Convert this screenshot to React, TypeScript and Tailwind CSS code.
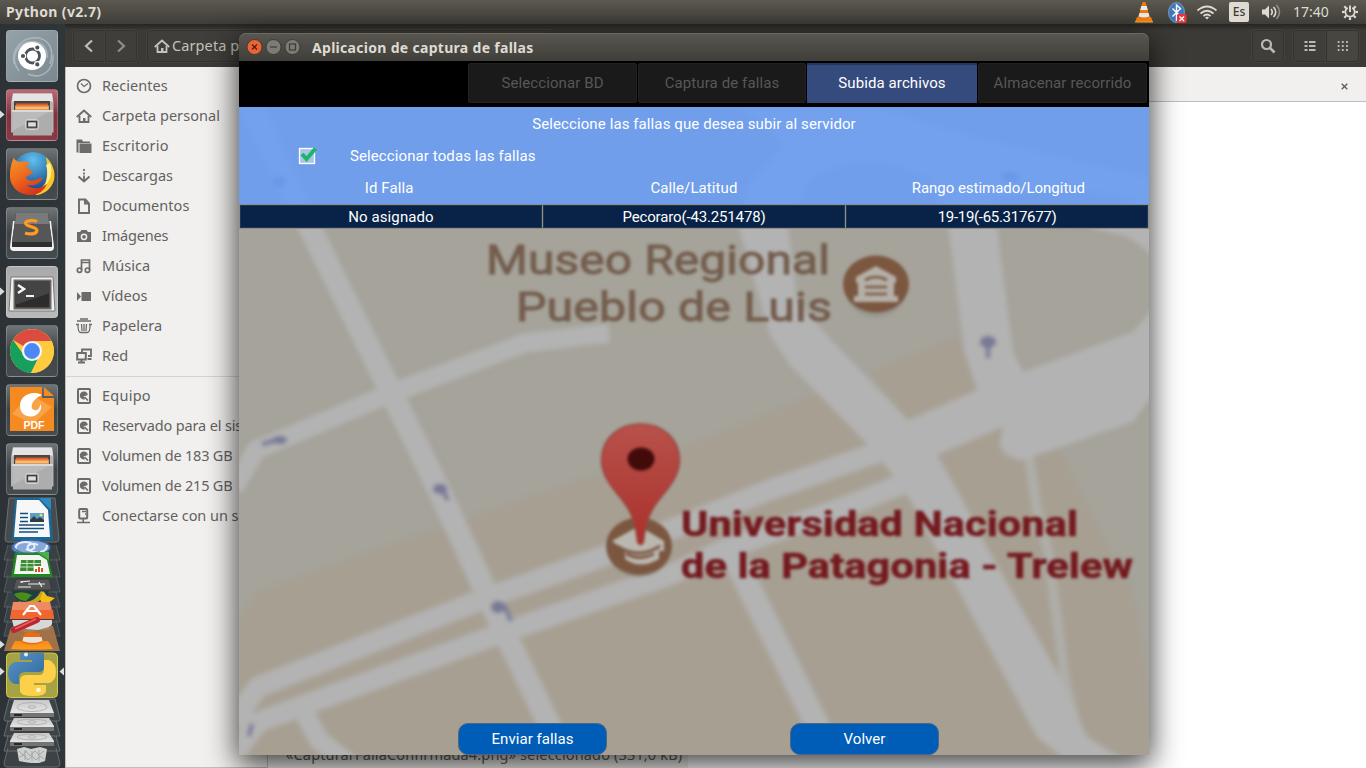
import React from "react";

type P = { children?: React.ReactNode };

const sans = "font-['Noto_Sans','Open_Sans',sans-serif]";

/* ---------- launcher ---------- */

function Tile({ children, bg, arrow }: P & { bg: string; arrow?: boolean }) {
  return (
    <div className="relative flex h-[52px] w-[65px] shrink-0 items-center pl-1.5">
      {arrow && (
        <svg className="absolute left-0 top-[20px]" width="5" height="11" viewBox="0 0 5 11">
          <path d="M0 1.5 4.6 5.5 0 9.5Z" fill="#dcdcdc" />
        </svg>
      )}
      <div className={`h-[52px] w-[52px] overflow-hidden rounded-[4px] border border-white/20 ${bg}`}>
        <svg width="50" height="50" viewBox="1 1 50 50">{children}</svg>
      </div>
    </div>
  );
}

const dark = "bg-linear-to-b from-[#6f7477] via-[#3e4346] to-[#454c4f]";

function Cabinet() {
  return (
    <g>
      <path d="M7 4.500h39l1.500 9v30H5v-30z" fill="#b4b4b4" />
      <path d="M7 4.500h39l1 8H6z" fill="#e4e4e4" />
      <rect x="8" y="12" width="36" height="11" fill="#4a4442" />
      <path d="M10 14.500h32v3H10z" fill="#d8602a" />
      <path d="M9 16.500h34v6H9z" fill="#e9984a" />
      <path d="M10 18.500h32v1H10z" fill="#fbe0b4" />
      <path d="M7 21.500h39v25H7z" fill="#adadad" />
      <path d="M7 21.500h39l-39 20z" fill="#bababa" />
      <path d="M6 21h41v2H6z" fill="#d9d9d9" />
      <rect x="19.500" y="30.500" width="13" height="10" rx="2" fill="#a2a2a2" stroke="#d4d4d4" />
      <rect x="21.500" y="32.700" width="9" height="5.500" fill="#dedede" stroke="#3a3a3a" strokeWidth="1.300" />
    </g>
  );
}

function Stack() {
  return (
    <svg className="mt-0.5 shrink-0" width="65" height="271" viewBox="0 497 65 271">
      <defs>
        <linearGradient id="drive" x1="0" y1="0" x2="0" y2="1">
          <stop offset="0" stopColor="#c8c8c8" />
          <stop offset="1" stopColor="#efefef" />
        </linearGradient>
        <linearGradient id="pyb" x1="0" y1="0" x2="1" y2="1">
          <stop offset="0" stopColor="#5b93c4" />
          <stop offset="1" stopColor="#2d69a0" />
        </linearGradient>
        <linearGradient id="vlc" x1="0" y1="0" x2="0" y2="1">
          <stop offset="0" stopColor="#f58a1b" />
          <stop offset="1" stopColor="#ff9c1c" />
        </linearGradient>
      </defs>
      <path d="M9 498h46l4 41q0 3-3 3H8q-3 0-3-3z" fill="#454b4f" stroke="#6a7074" />
      <path d="M8 545 4 560h56l-4-15M8 558 4 577h56l-4-19M8 575l-4 17h56l-4-17M8 592l-4 15h56l-4-15M8 605l-4 17h56l-4-17M8 620l-4 16h56l-4-16" fill="#3a4144" stroke="#565c60" />
      {/* writer */}
      <path d="M15 498h27l9 10 2 32H12z" fill="#1b6597" />
      <path d="M17 500h22l9 10 2 27H14z" fill="#f7f7f7" />
      <path d="M39 498h12v12z" fill="#2f89c0" />
      <path d="M20 513.500h8M20 517.500h8M20 521.500h8M19 525h25M19 528.500h25M19 532h19" stroke="#15507d" strokeWidth="1.700" />
      <rect x="30" y="513" width="14" height="9" fill="#5b9fc9" />
      <path d="M30 522v-2l4-4 3 3 3-2 4 3v2z" fill="#303b42" />
      <circle cx="41" cy="515" r="1.500" fill="#f0d75a" />
      {/* spiral */}
      <ellipse cx="31" cy="547.500" rx="19" ry="7.500" fill="#87a9d8" stroke="#3a65a4" strokeWidth="1.500" />
      <path d="M16 550c-2-8 10-10 17-6 5 4-3 8-7 5M47 545c0 8-12 9-18 5-5-5 4-8 9-5" fill="none" stroke="#e6eefb" strokeWidth="2" />
      <path d="M12 545c4 8 14 10 28 7" fill="none" stroke="#406dae" strokeWidth="1.500" />
      {/* calc */}
      <path d="M15 553h25l8 4 5 20H11z" fill="#1e8a1e" />
      <path d="M17 555h22l8 5 3 14H14z" fill="#f4f5f2" />
      <path d="M37 552h12v8z" fill="#48b248" />
      <path d="M21 560h20v11H20z" fill="#3b8c34" />
      <path d="M20.500 563.500h20M20 567h20M27 560v11M34 560v11" stroke="#d6ead0" strokeWidth=".9" />
      <path d="M34 566h9v6h-9z" fill="#fff" />
      <path d="M36 572v-3M39 572v-5M42 572v-4" stroke="#d85320" strokeWidth="2" />
      {/* typed card */}
      <path d="M16 579h33l3 11H13z" fill="#555" stroke="#393939" />
      <path d="M20 582l10-1M22 583v-2M28 584h17M39 582l3 5M18 587h13" stroke="#eee" strokeWidth="1.200" />
      {/* globe */}
      <path d="M11 591h38l-4 9q-14 6-27 1z" fill="#1d3f42" />
      <path d="M14 594q8-4 18 1l-6 6q-8 0-12-7" fill="#4d8a1e" />
      <path d="M18 601q16 4 23-10l4 2q-5 13-22 12z" fill="#c3a51c" />
      <path d="m43 591 4 5 8 2-12 9-3-8z" fill="#f3bf17" />
      {/* software box */}
      <path d="M13 602h37l4 17H10z" fill="#ee8a63" />
      <path d="M12 610h41l1 9H10z" fill="#f1652f" />
      <path d="m23 615 7-9h4l7 9M27 611h11" fill="none" stroke="#fff" strokeWidth="2.200" />
      {/* settings */}
      <path d="M12 620h40v4l-3 6h-12l-6 4-8-3-9-3z" fill="#d7d8d8" />
      {/* vlc */}
      <path d="m12 627 41-1 7 25H4l6-21z" fill="#a9764b" fillOpacity=".92" />
      <path d="M22 622h27v5l-11 3-12-1z" fill="#d7d8d8" />
      <path d="m37 620-23 10" stroke="#be2530" strokeWidth="6" strokeLinecap="round" />
      <path d="m36 619-21 10" stroke="#e6655f" strokeWidth="1.500" />
      <path d="M15 641h33l5 8q-20 1-42 0z" fill="url(#vlc)" />
      <path d="M25 633h14l4 9q-11 5-22 0z" fill="#f06a0a" />
      <path d="M23.500 637h18l1 4q-10 4-20 0z" fill="#e6e3df" />
      {/* python */}
      <rect x="6.500" y="653" width="51" height="44.500" rx="4" fill="#a5a346" stroke="#cdca4a" />
      <path d="M20 653h24v14q0 5-6 5H25q-6 0-6 6v6h-4q-7-2-7-11t7-11h17v-2H20z" fill="url(#pyb)" />
      <path d="M44 660h5q7 3 7 12t-7 11H34v2h12v6q0 5-13 5t-13-5v-10q0-6 6-6h13q5 0 5-6z" fill="#fdd04a" />
      <circle cx="26" cy="654.500" r="2" fill="#e1eef8" />
      <circle cx="38.500" cy="690" r="2.300" fill="#fff7dc" />
      {/* drives and trash */}
      <path d="M9 699 4 719q0 2 2 2h52q2 0 2-2l-5-20zM8 721l-4 15h56l-4-15M8 736l-4 15h56l-4-15M8 748l-4 15q0 4 3 4h50q3 0 3-4l-4-15" fill="#3c4346" stroke="#666c70" />
      {[0, 18, 33].map((d, i) => (
        <g key={d} transform={`translate(0 ${d})`}>
          <path d={i ? "M14 700h35l5 8v5H10v-5z" : "M14 700h35l5 13v4H10v-4z"} fill="url(#drive)" />
          <path d={i ? "M10 709h44v4H10z" : "M10 713h44v4H10z"} fill="#747474" />
          <path d={i ? "M14 710h8v2h-8z" : "M14 714h8v2h-8z"} fill="#262626" />
          <ellipse cx="32" cy={i ? 704 : 707} rx="15" ry={i ? 2.8 : 4.5} fill="none" stroke="#b4b4b4" />
          <ellipse cx="32" cy={i ? 704 : 707} rx="4" ry="1.300" fill="none" stroke="#b4b4b4" />
        </g>
      ))}
      <path d="m17 749 7-2 7 2 9-2 7 2-2 12-6 2-8 0-7-1-5-1z" fill="#cfd0cf" />
      <path d="m19 751 4 4 3-4 4 5 5-5 4 4 5-4M20 757l4-2 4 5 4-4 4 4 4-4 4 3M25 750v10M32 751v10M39 750v11" fill="none" stroke="#a3a6a5" />
      <path d="M0 640.500 4.600 644.500 0 648.500ZM0 667.500 4.600 671.500 0 675.500ZM64 667.500 59.500 671.500 64 675.500Z" fill="#dcdcdc" />
    </svg>
  );
}

function Launcher() {
  return (
    <aside className="flex w-[65px] shrink-0 flex-col bg-linear-to-r from-[#2c3235] to-[#2f3639] pt-1.5">
      <div className="flex flex-col gap-[7px]">
        <Tile bg="bg-linear-to-br from-[#95a2a8] to-[#7b898f]">
          <g fill="none" stroke="#b9c4c8" strokeWidth="1.500" opacity=".7">
            <path d="M8 34C5 18 17 6 33 8c12 3 15 14 11 26" />
            <path d="M13 41c-9-12-4-24 8-29 14-3 21 6 20 16" />
            <path d="M22 44c14 6 26-4 25-19" />
          </g>
          <circle cx="26" cy="26" r="14" fill="#fff" />
          <circle cx="26.500" cy="26" r="7" fill="none" stroke="#4a5559" strokeWidth="2.800" />
          <g fill="#4a5559" stroke="#fff" strokeWidth="1.200">
            <circle cx="17" cy="26" r="2.700" />
            <circle cx="31.300" cy="17.600" r="2.700" />
            <circle cx="31.300" cy="34.400" r="2.700" />
          </g>
        </Tile>
        <Tile bg="bg-linear-to-b from-[#b66c77] via-[#84303d] to-[#8a3946]" arrow>
          <Cabinet />
        </Tile>
        <Tile bg={dark}>
          <defs>
            <radialGradient id="ffb" cx=".5" cy=".2" r=".8">
              <stop offset="0" stopColor="#5ec2ef" />
              <stop offset="1" stopColor="#173f86" />
            </radialGradient>
            <linearGradient id="ffo" x1="0" y1="0" x2=".6" y2="1">
              <stop offset="0" stopColor="#f59a2c" />
              <stop offset=".5" stopColor="#ee6a1f" />
              <stop offset="1" stopColor="#d5351c" />
            </linearGradient>
          </defs>
          <circle cx="27" cy="24" r="20" fill="url(#ffb)" />
          <path d="M40 9c6 6 10 14 8 23-2 8-9 14-17 15-5 0 6-6 9-14 2-8 1-15 1-17z" fill="#f9c52b" />
          <path d="M44 15c3 8 1 17-5 23 3-8 3-15 1-21z" fill="#fdf08a" />
          <path d="M8 9c0 3 3 4 5 5 5-1 10 0 12 2-3 0-5 2-3 5 2 1 4 1 5 3-2 3-6 3-7 6 3 5 11 2 17-1-3 8-10 9-16 8 5 5 14 4 20-1-3 7-9 11-16 11C12 47 4 38 4 28 4 19 6 14 8 9Z" fill="url(#ffo)" />
        </Tile>
        <Tile bg={dark}>
          <path d="M7 14h38l3 26q0 4-4 4H8q-4 0-4-4z" fill="#f2f2f2" />
          <path d="M10 6h32l4 29v5H6v-5z" fill="#2f2f2f" />
          <path d="M10 6h32l4 29H6z" fill="#565656" />
          <path d="M10 6h32l1 11H9z" fill="#7a7a7a" />
          <path d="M31 14.500c-3.500-1.500-11-1.500-11.500 1.500 0 4 11.500 3.500 11.500 7.500-.5 4-7.500 4-12 2.500" fill="none" stroke="#ff9b20" strokeWidth="3.200" />
        </Tile>
        <Tile bg="bg-linear-to-b from-[#aaa] to-[#b9b9b9]" arrow>
          <path d="M5 11h42l2 34H3z" fill="#f1f1ee" stroke="#777" />
          <rect x="8.500" y="14.500" width="36" height="28" fill="#2c2c2c" stroke="#686868" strokeWidth="2" />
          <path d="M9 15h35v12L9 39z" fill="#444" />
          <path d="m12 19 6 4-6 4" fill="none" stroke="#f4f4f4" strokeWidth="2.500" />
          <path d="M20 30h8" stroke="#f4f4f4" strokeWidth="2" />
        </Tile>
        <Tile bg={dark}>
          <circle cx="26" cy="26" r="22" fill="#fdcb3e" />
          <path d="M26 26 7 15A22 22 0 0 1 45.500 16H26z" fill="#dc4b3f" />
          <path d="M7 15A22 22 0 0 0 25 48l9-18-8-4-9 3z" fill="#17a05d" />
          <path d="M25 48A22 22 0 0 0 45.500 16H30l5 11z" fill="#fdcb3e" />
          <circle cx="26" cy="26" r="9" fill="#4b87f5" stroke="#f3f4f5" strokeWidth="2.200" />
        </Tile>
        <Tile bg={dark}>
          <path d="M4 3h32v11h12v33H4z" fill="#f58a20" />
          <path d="M38 3v9h10z" fill="#f58a20" />
          <path d="m6 30 18-20 22 13-19 17z" fill="#f8a348" />
          <path d="M36 11C26 6 14 11 14 22c0 8 7 12 14 10 6-2 9-9 6-12 0 4-2 7-6 6-5-2-2-11 8-15Z" fill="#fff" />
          <text x="17.500" y="45" fontFamily="Liberation Sans, sans-serif" fontWeight="700" fontSize="10.500" textLength="21" fill="#fff">PDF</text>
        </Tile>
        <Tile bg={dark}>
          <Cabinet />
        </Tile>
      </div>
      <Stack />
    </aside>
  );
}

/* ---------- top panel ---------- */

function Cone() {
  return (
    <svg width="20" height="22" viewBox="0 0 20 22">
      <path d="M3 16h14l2 5H1z" fill="#f58310" />
      <path d="M8.500 1h3l4.500 16q-6 2.500-12 0z" fill="#f27a0b" />
      <path d="M7.300 5h5.400l1.100 4H6.200zM5.500 12h9l1 3.500q-5.500 2-11 0z" fill="#ececec" />
      <path d="M1 21h18" stroke="#ffb03a" />
    </svg>
  );
}

const teeth = [45, 90, 135, 180, 225, 270, 315];

function TopPanel() {
  return (
    <header className={`flex h-6 shrink-0 items-center justify-between bg-linear-to-b from-[#5b5950] to-[#3f3d38] text-[#dfdbd2] ${sans}`}>
      <div className="pl-1.5 text-[14px] leading-6 font-bold tracking-[0.35px]">Python (v2.7)</div>
      <div className="flex items-center pr-[7px]">
        <Cone />
        <svg className="ml-3.5" width="20" height="23" viewBox="0 0 20 23">
          <ellipse cx="8.500" cy="11.500" rx="8" ry="10" fill="#4377bb" stroke="#8cb0dd" strokeWidth=".7" />
          <path d="m4.500 7.500 8 8-4 3.500V4l4 3.500-8 8" fill="none" stroke="#fff" strokeWidth="1.400" />
          <rect x="9" y="13" width="9.500" height="9" rx="1.500" fill="#e8353b" />
          <path d="m11.500 15.500 4.500 4.500m0-4.500L11.500 20" stroke="#fff" strokeWidth="1.400" />
        </svg>
        <svg className="ml-2" width="22" height="16" viewBox="0 0 22 16" fill="none" stroke="#dfdbd2" strokeWidth="1.700">
          <path d="M1.500 6.500q9.500-8 19 0M4.500 9.500q6.500-5.500 13 0M7.500 12q3.500-3 7 0" />
          <path d="m9 13.500 2 2 2-2q-2-1.500-4 0Z" fill="#dfdbd2" stroke="none" />
        </svg>
        <div className="ml-[11px] flex h-5 w-5 items-center justify-center rounded-[2px] bg-[#dfdbd2] text-[12px] font-medium text-[#3c3b37]">Es</div>
        <svg className="ml-3" width="20" height="18" viewBox="0 0 20 18" fill="none" stroke="#dfdbd2" strokeWidth="1.600">
          <path d="M1 6.500h3l4-4v13l-4-4H1z" fill="#dfdbd2" stroke="none" />
          <path d="M10 6q2.500 3 0 6M12.500 4q4.500 5 0 10" />
          <path d="M15.500 2q6 7 0 14" opacity=".45" />
        </svg>
        <div className="ml-3 w-[36px] text-[14px] leading-6 whitespace-nowrap">17:40</div>
        <svg className="ml-3" width="18" height="18" viewBox="0 0 18 18" fill="none" stroke="#dfdbd2">
          <path d="M6.700 4.900a4.700 4.700 0 1 0 4.600 0" strokeWidth="1.800" />
          <path d="M9 2.500v6.500" strokeWidth="1.900" />
          {teeth.map((a) => (
            <path key={a} d="M9 3.600V1" strokeWidth="2.200" transform={`rotate(${a} 9 9)`} />
          ))}
        </svg>
      </div>
    </header>
  );
}

/* ---------- file manager ---------- */

const hdd = (
  <>
    <rect x="2" y="1" width="12" height="14" rx="1" strokeWidth="2" />
    <path d="M8 3.500a4 4 0 1 0 1 7.800L7.500 8.500 11.800 7A4 4 0 0 0 8 3.500Z" fill="#6b6b69" stroke="none" />
    <path d="m8.500 9 3.500 3.500" strokeWidth="1.600" />
  </>
);

const icons: Record<string, React.ReactNode> = {
  clock: <><circle cx="8" cy="8" r="6.500" strokeWidth="1.700" /><path d="M5 5.500 8 8.500l4-3" strokeWidth="1.200" /></>,
  home: <><path d="m.8 9 7.200-6.500L15.200 9" strokeWidth="2" /><path d="M3.500 8v6h9V8" strokeWidth="1.800" /><path d="M7 10h2.500v4H7z" fill="#6b6b69" stroke="none" /></>,
  folder: <path d="M.5 1.500h5.500l1 2h7v1.500H2.500v9.500h-2zM3.500 5.500h12v9.500h-12z" fill="#6b6b69" stroke="none" />,
  down: <><path d="M8 1v2M8 4.500v2M8 7.500v5" strokeWidth="1.800" /><path d="m2.500 8.500 5.500 5 5.500-5" strokeWidth="2" /></>,
  doc: <path d="M3 1.500h6.500l3.500 4v9.500H3zM9 1.500v4h4" strokeWidth="1.900" />,
  camera: <><path d="M1 4h3l1.500-2h5L12 4h3v10H1z" fill="#6b6b69" stroke="none" /><circle cx="8" cy="8.800" r="2.600" stroke="#f1f0ee" strokeWidth="1.500" /></>,
  music: <><path d="M5.500 12V2h8v10M5.500 4.500h8" strokeWidth="1.700" /><circle cx="3.500" cy="12.200" r="2.200" strokeWidth="1.700" /><circle cx="11.500" cy="12.200" r="2.200" strokeWidth="1.700" /></>,
  video: <path d="M1 4v9l4-4.500zM5.500 4h9.500v9H5.500z" fill="#6b6b69" stroke="none" />,
  trash: <><path d="M1 3h14M4 1h8" strokeWidth="1.500" /><path d="M2 6.500q0 8 2.500 8h7q2.500 0 2.500-8M5.500 6l.5 7M8 6v7M10.500 6l-.5 7M0 6.500h3M13 6.500h3" strokeWidth="1.300" /></>,
  net: <><path d="M6 4V1.500h9V8h-3" strokeWidth="1.800" /><rect x="1.200" y="5" width="8.600" height="6.500" strokeWidth="2" /><path d="M2 14.500h7M5.500 11v3M11.500 11h4" strokeWidth="1.800" /></>,
  hdd,
  server: <><rect x="3.200" y="1" width="8" height="9.500" rx="1" strokeWidth="2" /><path d="M6 3.500h4M9 6h1M7.200 10v4M1 14.500h13" strokeWidth="1.600" /></>,
};

function Place({ icon, label, track = "tracking-[0.05px]" }: { icon: string; label: string; track?: string }) {
  return (
    <li className="flex h-[30px] items-center gap-[10px] pl-[10px] whitespace-nowrap">
      <svg className="shrink-0" width="16" height="16" viewBox="0 0 16 16" fill="none" stroke="#6b6b69">
        {icons[icon]}
      </svg>
      <span className={track}>{label}</span>
    </li>
  );
}

function Files() {
  const btn = "flex items-center justify-center border border-[#33322e] shadow-[0_0_0_1px_#44423d]";
  return (
    <main className={`flex min-w-0 flex-1 flex-col ${sans}`}>
      <div className="flex h-[43px] shrink-0 items-center bg-linear-to-b from-[#262522] via-[#3b3a36] via-15% to-[#3c3a36] pl-2 text-[15px] text-[#c5c2b8]">
        <div className={`${btn} h-8 w-8 rounded-l-[4px] bg-[#403e3a]`}>
          <svg width="16" height="16" viewBox="0 0 16 16" fill="none" stroke="#c0bdb2" strokeWidth="2.200"><path d="M11 2.500 5 8l6 5.500" /></svg>
        </div>
        <div className={`${btn} h-8 w-8 rounded-r-[4px] bg-[#403e3a]`}>
          <svg width="16" height="16" viewBox="0 0 16 16" fill="none" stroke="#918f87" strokeWidth="2.200"><path d="m5 2.500 6 5.500-6 5.500" /></svg>
        </div>
        <div className={`${btn} ml-[10px] h-8 w-[152px] justify-start! rounded-l-[4px] bg-[#403e3a] pl-1.5 whitespace-nowrap`}>
          <svg className="shrink-0" width="16" height="16" viewBox="0 0 16 16" fill="none" stroke="#c5c2b8"><path d="m.8 9 7.200-6.500L15.200 9" strokeWidth="2" /><path d="M3.500 8v6h9V8" strokeWidth="1.800" /><path d="M7 10h2.500v4H7z" fill="#c5c2b8" stroke="none" /></svg>
          <span className="ml-0.5 text-[14.5px] tracking-[0.1px]">Carpeta personal</span>
        </div>
        <div className={`${btn} h-8 w-[158px] bg-[#403e3a]`} />
        <div className={`${btn} h-8 w-[92px] bg-[#403e3a]`} />
        <div className="ml-auto flex items-center pr-[7px]">
          <div className={`${btn} h-8 w-8 rounded-[4px] bg-[#403e3a]`}>
            <svg width="18" height="18" viewBox="0 0 18 18" fill="none" stroke="#bdbab0"><circle cx="7.500" cy="7.500" r="4.500" strokeWidth="2.200" /><path d="m11 11 4.500 4.500" strokeWidth="2.600" /></svg>
          </div>
          <div className={`${btn} ml-[9px] h-8 w-[33px] rounded-l-[4px] bg-[#403e3a]`}>
            <svg width="12" height="12" viewBox="0 0 12 12" stroke="#bdbab0" strokeWidth="2"><path d="M.5 2h3M.5 6h3M.5 10h3M5 2h6.500M5 6h6.500M5 10h6.500" /></svg>
          </div>
          <div className={`${btn} h-8 w-[33px] rounded-r-[4px] bg-[#484641]`}>
            <svg width="12" height="12" viewBox="0 0 12 12" stroke="#bdbab0" strokeWidth="1.800" strokeDasharray="1.800 2.400"><path d="M.7 2H12M.7 6H12M.7 10H12" /></svg>
          </div>
        </div>
      </div>
      <div className="flex min-h-0 flex-1">
        <nav className="w-[203px] shrink-0 overflow-hidden border-r border-b border-l border-[#c0bebb] bg-[#f1f0ee] text-[14.5px] text-[#63625f]">
          <ul className="pt-1">
            <Place icon="clock" label="Recientes" />
            <Place icon="home" label="Carpeta personal" />
            <Place icon="folder" label="Escritorio" track="tracking-[0.25px]" />
            <Place icon="down" label="Descargas" />
            <Place icon="doc" label="Documentos" />
            <Place icon="camera" label="Imágenes" track="tracking-[-0.2px]" />
            <Place icon="music" label="Música" />
            <Place icon="video" label="Vídeos" />
            <Place icon="trash" label="Papelera" />
            <Place icon="net" label="Red" />
          </ul>
          <hr className="my-[4.500px] h-px border-0 bg-[#d4d3d1]" />
          <ul>
            <Place icon="hdd" label="Equipo" track="tracking-[0.25px]" />
            <Place icon="hdd" label="Reservado para el sistema" track="tracking-[-0.15px]" />
            <Place icon="hdd" label="Volumen de 183 GB" track="tracking-[-0.2px]" />
            <Place icon="hdd" label="Volumen de 215 GB" track="tracking-[-0.2px]" />
            <Place icon="server" label="Conectarse con un servidor" track="tracking-[-0.05px]" />
          </ul>
        </nav>
        <section className="flex min-w-0 flex-1 flex-col justify-between bg-white">
          <div className="flex h-[35px] items-center justify-end border-b border-[#c0bebb] bg-[#f1f0ee] pr-[18px] pt-1">
            <svg width="7" height="7" viewBox="0 0 7 7" stroke="#5c5b58" strokeWidth="1.300"><path d="m.7.700 5.600 5.600m0-5.600L.7 6.300" /></svg>
          </div>
          <div className="h-[26px] w-[420px] bg-[#f1f0ee] pl-[18px] text-[14.5px] leading-[25px] tracking-[0.15px] whitespace-nowrap text-[#63625f]">
            «CapturarFallaConfirmada4.png» seleccionado (331,0 kB)
          </div>
        </section>
      </div>
    </main>
  );
}

/* ---------- capture application ---------- */

function MapArt() {
  return (
    <svg className="absolute inset-0" width="910" height="648" viewBox="239 107 910 648">
      <defs>
        <filter id="soft" x="-5%" y="-5%" width="110%" height="110%" colorInterpolationFilters="sRGB"><feGaussianBlur stdDeviation="2.600" /></filter>
        <filter id="softArrow" x="-5%" y="-5%" width="110%" height="110%" colorInterpolationFilters="sRGB"><feGaussianBlur stdDeviation="2.100" /></filter>
        <filter id="softText" x="-5%" y="-20%" width="110%" height="140%" colorInterpolationFilters="sRGB"><feGaussianBlur stdDeviation="1.700" /></filter>
        <linearGradient id="pin" x1="0" y1="0" x2="0" y2="1">
          <stop offset="0" stopColor="#b7524a" />
          <stop offset="1" stopColor="#ab2f2b" />
        </linearGradient>
      </defs>
      <rect x="239" y="107" width="910" height="648" fill="#a5a39a" />
      <g filter="url(#soft)">
        <path d="M220 650 256 593 426 533 552 490 699 442 817 395 870 372 957 337 977 390 1063 455 1080 495 1107 547 1130 583 1147 680 1150 770H220Z" fill="#a79f92" />
        <g fill="none" stroke="#b3b3b3" strokeLinejoin="round">
          <path d="M243 90 296 200 310 228 391 392 439 490 486 592 506 635 566 760" strokeWidth="23" />
          <path d="M234 488 256 450 389 394 525 343 609 333" strokeWidth="19" />
          <path d="M232 722 258 687 486 598 602 557 717 511 767 491 890 448" strokeWidth="21" />
          <path d="M232 756 258 722 502 633 672 574 723 550 850 505 905 483" strokeWidth="21" />
          <path d="M732 553 822 735 836 770" strokeWidth="24" />
          <path d="M300 705 319 740 350 765" strokeWidth="20" />
          <path d="M1028 450 1037 510 1048 550 1065 680 1075 720" strokeWidth="10" stroke="#aeaea9" />
        </g>
        <path d="M738 225 748 185 785 145 735 100 850 100 973 137 1160 180V262L1133 240 1123 235 1085 227H997L1005 290 1013 352 1023 372 1133 332 1160 300V385L1133 422 1023 460Q1000 458 1000 440L1003 427 937 455 960 495 983 540 1060 677 1087 737 1125 760H1066L1037 737 957 587 910 500 885 465 870 447 790 365 770 335Z" fill="#b3b3b3" />
        <path d="M788 225 797 302 833 342 908 420 977 390 965 355 948 225 930 180Q870 145 812 178Z" fill="#a5a39a" />
        <path d="m870 372 87-35 8 18 12 35-69 30Z" fill="#a79f92" />
        <path d="M997 225 992 198Q1060 180 1138 200L1115 210 1090 228Z" fill="#a5a39a" />
      </g>
      <g filter="url(#softArrow)">
        <g fill="none" stroke="#777996" strokeWidth="4">
          <path d="m262 444 20-5M272 440h14M436 486l6 4 6 10M439 490h8M495 606h10l3 8 3 7M988 338v20M983 342h10M252 724l-3 12" />
        </g>
        <g fill="#777996">
          <ellipse cx="280" cy="440" rx="7" ry="4" />
          <ellipse cx="440" cy="489" rx="7" ry="5" />
          <ellipse cx="498" cy="607" rx="7" ry="6" />
          <ellipse cx="988" cy="342" rx="8" ry="6" />
          <ellipse cx="279" cy="182" rx="7" ry="6" />
          <ellipse cx="1010" cy="177" rx="9" ry="5" />
        </g>
      </g>
      <g filter="url(#softText)">
        <ellipse cx="876" cy="289" rx="31" ry="28" fill="#96948d" />
        <ellipse cx="876" cy="284" rx="33" ry="28.500" fill="#7b5740" />
        <path d="M876 266 896 277v6h-2v13h4v6h-44v-6h4v-13h-2v-6Z" fill="#b4b0a8" />
        <path d="M865 280q11-6 22 0M865 287h22M865 294h22" fill="none" stroke="#7b5740" strokeWidth="2.600" />
        <ellipse cx="639" cy="549" rx="32" ry="28" fill="#908a80" />
        <ellipse cx="639" cy="546" rx="33" ry="28.500" fill="#7b5740" />
        <path d="m612 541 27-15 25 15v10h-5v8q-19 11-34 0v-8Z" fill="#bab7b1" />
        <path d="M617 546q22 14 43 0M626 554q13 7 28 0" fill="none" stroke="#7b5740" strokeWidth="3" />
        <path d="M640.500 424c22 0 39 15 39 36 0 15-10 27-20 39-9 11-14 22-16 43q-3 5-6 0c-2-21-7-32-16-43-10-12-20-24-20-39 0-21 17-36 39-36Z" fill="url(#pin)" stroke="#96443d" strokeWidth="1.500" />
        <ellipse cx="641" cy="459" rx="13.500" ry="11.500" fill="#420b0a" />
      </g>
      <g filter="url(#softText)" fontFamily="Roboto, sans-serif">
        <g fill="#745d4d" fontSize="40.500" stroke="#745d4d" strokeWidth=".9">
          <text x="486" y="274" textLength="344" lengthAdjust="spacingAndGlyphs">Museo Regional</text>
          <text x="516" y="321" textLength="316" lengthAdjust="spacingAndGlyphs">Pueblo de Luis</text>
        </g>
        <g fill="#74191e" stroke="#74191e" strokeWidth=".6" fontSize="35" fontWeight="700">
          <text x="681" y="535.500" textLength="397" lengthAdjust="spacingAndGlyphs">Universidad Nacional</text>
          <text x="681" y="577.500" textLength="452" lengthAdjust="spacingAndGlyphs">de la Patagonia - Trelew</text>
        </g>
      </g>
    </svg>
  );
}

function Tab({ children, width = "w-[169px]" }: P & { width?: string }) {
  return (
    <div className={`flex h-10 items-center justify-center rounded-[2px] border border-[#222] bg-[#1a1a1a] text-[#575757] ${width}`}>
      {children}
    </div>
  );
}

function CaptureApp() {
  const btn = "flex h-8 w-[149px] items-center justify-center rounded-[10px] border border-[#4c6684] bg-[#005db7] pt-[1.500px] tracking-[0.05px]";
  const cell = "flex items-center justify-center border border-[#1f3554] bg-[#082347] pt-px";
  return (
    <div className="absolute top-[33px] left-[239px] flex h-[722px] w-[910px] flex-col overflow-visible rounded-t-[7px] shadow-[0_8px_30px_2px_rgba(0,0,0,0.75)]">
      <div className={`flex h-7 shrink-0 items-center rounded-t-[7px] bg-linear-to-b from-[#595750] to-[#403e39] pl-[7px] text-[#dfdbd2] shadow-[inset_0_1px_0_#6b6960] ${sans}`}>
        <svg width="55" height="18" viewBox="0 0 55 18">
          <circle cx="8.500" cy="9" r="7.500" fill="#ec6338" stroke="#33322e" strokeWidth=".8" />
          <path d="m6 6.500 5 5m0-5-5 5" stroke="#4b2415" strokeWidth="1.300" />
          <circle cx="27.500" cy="9" r="7.500" fill="#7d7b73" stroke="#33322e" strokeWidth=".8" />
          <path d="M24 9h7" stroke="#3c3b37" strokeWidth="1.200" />
          <circle cx="46.500" cy="9" r="7.500" fill="#7d7b73" stroke="#33322e" strokeWidth=".8" />
          <rect x="43.500" y="6" width="6" height="6" fill="none" stroke="#3c3b37" strokeWidth="1.200" />
        </svg>
        <span className="ml-[11px] text-[14px] font-bold tracking-[0.3px]">Aplicacion de captura de fallas</span>
      </div>
      <div className="relative flex flex-1 flex-col font-[Roboto,sans-serif] text-[15px] leading-none tracking-[0.1px] text-white">
        <div className="flex h-[46px] shrink-0 items-start justify-end gap-px bg-black pt-0.5 pr-0.5">
          <Tab>Seleccionar BD</Tab>
          <Tab width="w-[168px]">Captura de fallas</Tab>
          <div className="flex h-10 w-[170px] items-center justify-center border-t-2 border-[#24355c] bg-[#354b7e] pb-0.5">
            Subida archivos
          </div>
          <Tab>Almacenar recorrido</Tab>
        </div>
        <div className="relative flex flex-1 flex-col justify-between">
          <MapArt />
          <div className="relative">
            <div className="h-[97px] bg-[#679ef8]/85 pt-px">
              <div className="flex h-8 items-center justify-center">Seleccione las fallas que desea subir al servidor</div>
              <div className="flex h-8 items-center pl-[59px]">
                <svg width="22" height="20" viewBox="0 0 22 20">
                  <rect x="1.500" y="2.500" width="15" height="15" fill="#a9c5ec" stroke="#fff" strokeWidth="1.300" />
                  <path d="m4 8 4.500 5 9-10.500" fill="none" stroke="#1cb569" strokeWidth="4" />
                </svg>
                <span className="ml-[30px]">Seleccionar todas las fallas</span>
              </div>
              <div className="grid h-8 grid-cols-3 items-center text-center">
                <span className="pr-[3px]">Id Falla</span>
                <span>Calle/Latitud</span>
                <span className="pl-0.5 tracking-[-0.02px]">Rango estimado/Longitud</span>
              </div>
            </div>
            <div className="grid h-[25px] grid-cols-3 gap-px bg-[#928e85] px-px pt-[1px] pb-px text-center">
              <div className={cell}>No asignado</div>
              <div className={`${cell} tracking-[-0.15px]`}>Pecoraro(-43.251478)</div>
              <div className={`${cell} tracking-[-0.3px]`}>19-19(-65.317677)</div>
            </div>
          </div>
          <div className="relative flex gap-[183px] pl-[219px]">
            <button className={btn}>Enviar fallas</button>
            <button className={btn}>Volver</button>
          </div>
        </div>
      </div>
    </div>
  );
}

export default function App() {
  return (
    <div className="relative flex h-[768px] w-[1366px] flex-col overflow-hidden bg-[#2c3235]">
      <TopPanel />
      <div className="flex min-h-0 flex-1">
        <Launcher />
        <Files />
      </div>
      <CaptureApp />
    </div>
  );
}
